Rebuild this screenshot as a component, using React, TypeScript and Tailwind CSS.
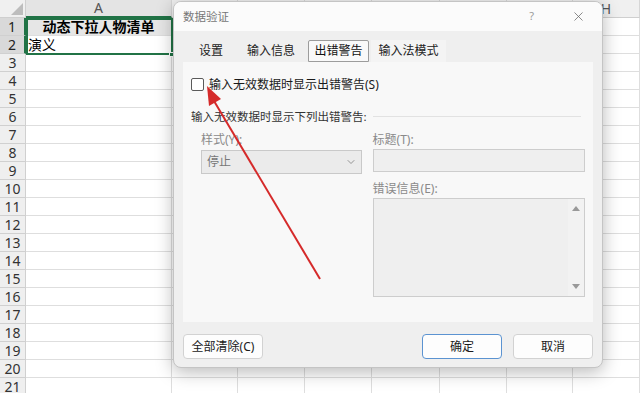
import { ChevronDown, X } from "lucide-react";

const columns: { name: string; width: string }[] = [
  { name: "A", width: "w-[146px]" },
  { name: "B", width: "w-[66px]" },
  { name: "C", width: "w-[67px]" },
  { name: "D", width: "w-[67px]" },
  { name: "E", width: "w-[68px]" },
  { name: "F", width: "w-[67px]" },
  { name: "G", width: "w-[66px]" },
  { name: "H", width: "w-[67px]" },
];

// only A and H show past the dialog
const visibleHeaders = ["A", "H"];

const rows: number[] = Array.from({ length: 21 }, (_, i) => i + 1);

function Sheet() {
  return (
    <div className="flex flex-col">
      {/* Column headers */}
      <div className="flex h-[18px] bg-[#f0f0f0]">
        <div className="relative w-[26px] border-r border-b border-[#cfcfcf]">
          <div className="absolute right-[2px] bottom-[2px] w-0 h-0 border-l-[12px] border-l-transparent border-b-[12px] border-b-[#bdbdbd]" />
        </div>
        {columns.map((col) => (
          <div
            key={col.name}
            className={`${col.width} flex items-center justify-center border-r border-[#d6d6d6] text-[14px] leading-[16px] text-[#555] ${
              col.name === "A" ? "border-b-2 border-b-[#217346] bg-[#e4e4e4]" : "border-b border-b-[#cfcfcf]"
            }`}
          >
            {visibleHeaders.includes(col.name) ? col.name : ""}
          </div>
        ))}
      </div>

      {/* Rows */}
      {rows.map((n) => (
        <div key={n} className="flex h-[18px]">
          <div
            className={`w-[26px] flex items-center justify-center border-b border-r border-[#d0d0d0] text-[14px] leading-[16px] ${
              n <= 2 ? "bg-[#d9d9d9] text-[#222] border-r-[#217346] border-r-2" : "bg-[#efefef] text-[#333]"
            }`}
          >
            {n}
          </div>
          {columns.map((col) => (
            <div
              key={col.name}
              className={`${col.width} flex items-center border-r border-b border-[#dedede] text-[14px] leading-[16px] text-black ${
                col.name === "A" && n === 1 ? "bg-[#e6e6e6] justify-center font-bold" : "bg-white px-[2px]"
              }`}
            >
              {col.name === "A" && n === 1 && "动态下拉人物清单"}
              {col.name === "A" && n === 2 && "演义"}
            </div>
          ))}
        </div>
      ))}
    </div>
  );
}

function Tab({ label, width, active, tint }: { label: string; width: string; active?: boolean; tint?: boolean }) {
  return (
    <div
      className={`${width} h-full flex items-center justify-center text-[12px] ${
        active
          ? "bg-[#f9f9f9] border border-[#9c9c9c] rounded-t-[2px] text-[#111]"
          : tint
          ? "bg-[#f4f4f4] text-[#222]"
          : "text-[#222]"
      }`}
    >
      {label}
    </div>
  );
}

function Dialog() {
  return (
    <div className="absolute left-[173px] top-[1px] w-[430px] h-[367px] flex flex-col rounded-[8px] border border-[#c4c4c4] bg-[#efefef] shadow-[0_4px_18px_rgba(0,0,0,0.28)] overflow-hidden">
      {/* Title bar */}
      <div className="h-[29px] shrink-0 flex items-center bg-[#fbfbfb] pl-[9px] pr-[16px]">
        <span className="text-[11.5px] text-[#777]">数据验证</span>
        <span className="ml-auto mr-[37px] text-[11px] text-[#9a9a9a]">?</span>
        <X size={15} strokeWidth={1.2} className="text-[#666]" />
      </div>

      <div className="flex flex-col px-[9px]">
        {/* Tabs */}
        <div className="mt-[9px] h-[22px] flex items-end pl-[3px]">
          <Tab label="设置" width="w-[50px]" />
          <Tab label="输入信息" width="w-[70px]" />
          <div className="w-[2px]" />
          <Tab label="出错警告" width="w-[61px]" active />
          <div className="w-[2px]" />
          <Tab label="输入法模式" width="w-[75px]" tint />
        </div>

        {/* Panel */}
        <div className="h-[260px] bg-[#f8f8f8] pt-[16px] px-[8px] flex flex-col">
          <div className="flex items-center h-[13px]">
            <div className="w-[13px] h-[13px] rounded-[2px] border border-[#5a5a5a] bg-white" />
            <span className="ml-[5px] text-[12px] leading-none text-[#1a1a1a]">输入无效数据时显示出错警告(S)</span>
          </div>

          <div className="mt-[17px] flex items-center h-[17px]">
            <span className="text-[11.5px] leading-none text-[#333]">输入无效数据时显示下列出错警告:</span>
            <div className="flex-1 ml-[6px] mr-[4px] h-px bg-[#e2e2e2]" />
          </div>

          <div className="mt-[7px] pl-[10px] flex gap-[11px]">
            {/* Style */}
            <div className="w-[161px] flex flex-col">
              <span className="h-[16px] text-[12px] leading-[16px] text-[#8a8a8a]">样式(Y):</span>
              <div className="mt-[2px] h-[24px] flex items-center bg-[#ebebeb] border border-[#c9c9c9] pl-[5px] pr-[4px]">
                <span className="text-[12px] text-[#777]">停止</span>
                <ChevronDown size={12} strokeWidth={1.5} className="ml-auto text-[#777]" />
              </div>
            </div>

            {/* Title + message */}
            <div className="w-[213px] flex flex-col">
              <span className="h-[16px] text-[12px] leading-[16px] text-[#8a8a8a]">标题(T):</span>
              <div className="mt-[1px] h-[23px] bg-[#efefef] border border-[#cdcdcd]" />
              <span className="mt-[9px] h-[16px] text-[12px] leading-[16px] text-[#8a8a8a]">错误信息(E):</span>
              <div className="mt-[1px] h-[99px] flex bg-[#efefef] border border-[#cdcdcd]">
                <div className="flex-1" />
                <div className="w-[16px] flex flex-col items-center justify-between py-[7px] bg-[#f2f2f2]">
                  <div className="w-0 h-0 border-l-[4px] border-r-[4px] border-b-[5px] border-l-transparent border-r-transparent border-b-[#999]" />
                  <div className="w-0 h-0 border-l-[4px] border-r-[4px] border-t-[5px] border-l-transparent border-r-transparent border-t-[#999]" />
                </div>
              </div>
            </div>
          </div>
        </div>

        {/* Buttons */}
        <div className="mt-[12px] h-[25px] flex">
          <button className="w-[80px] h-full bg-[#fdfdfd] border border-[#d2d2d2] rounded-[4px] text-[12px] text-[#1a1a1a]">
            全部清除(C)
          </button>
          <button className="ml-auto w-[80px] h-full bg-[#fdfdfd] border border-[#5b93d1] rounded-[4px] text-[12px] text-[#1a1a1a]">
            确定
          </button>
          <button className="ml-[11px] w-[80px] h-full bg-[#fdfdfd] border border-[#d2d2d2] rounded-[4px] text-[12px] text-[#1a1a1a]">
            取消
          </button>
        </div>
      </div>
    </div>
  );
}

export default function App() {
  return (
    <div
      className="relative w-[640px] h-[393px] overflow-hidden bg-white"
      style={{ fontFamily: '"Noto Sans", "Noto Sans CJK SC", sans-serif' }}
    >
      <Sheet />

      {/* Selection border A1:A2 */}
      <div className="absolute left-[26px] top-[18px] w-[147px] h-[37px] border-2 border-[#217346] pointer-events-none" />
      <div className="absolute left-[169px] top-[52px] w-[5px] h-[5px] bg-[#217346] border border-white" />

      <Dialog />

      {/* Red arrow */}
      <svg className="absolute inset-0 pointer-events-none" width="640" height="393" viewBox="0 0 640 393">
        <line x1="320" y1="279" x2="214" y2="101" stroke="#d52a2a" strokeWidth="2" />
        <polygon points="207,86 221,99 209,106" fill="#d52a2a" />
      </svg>
    </div>
  );
}
